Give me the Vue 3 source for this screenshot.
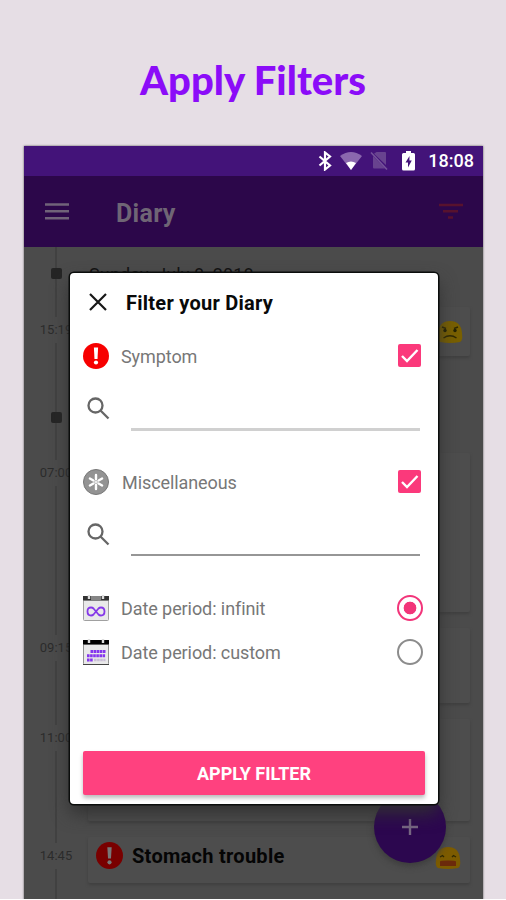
<template>
  <div class="page">
    <h1 class="headline">Apply Filters</h1>

    <div class="screen">
      <div class="status-bar">
        <svg class="bluetooth" viewBox="0 0 14 20">
          <path d="M1.5 5.5L12 14.5L7 18.5V1.5L12 5.5L1.5 14.5" />
        </svg>
        <svg class="wifi" viewBox="0 0 22 19">
          <path d="M0 4Q11-4 22 4L11 18Z" fill="#8b68ae" />
          <path d="M6 11Q11 8 16 11L11 18Z" fill="#fff" />
        </svg>
        <svg class="no-sim" viewBox="0 0 18 20">
          <path d="M6.5 1H15Q16 1 16 2V14L4 2.8ZM3 5L15 17.5H4Q3 17.5 3 16.5Z" fill="#68438f" />
          <path d="M1 1.5L17 18.5" stroke="#75539a" stroke-width="1.6" />
        </svg>
        <svg class="battery" viewBox="0 0 13 20">
          <path d="M4 0H9V2H11.5Q13 2 13 3.5V18Q13 19.5 11.5 19.5H1.5Q0 19.5 0 18V3.5Q0 2 1.5 2H4Z" fill="#fff" />
          <path d="M7.5 5L3.5 11.5H6V16.5L9.8 9.5H7.4Z" fill="#431379" />
        </svg>
        <span class="clock">18:08</span>
      </div>

      <div class="app-bar">
        <svg class="menu-icon" viewBox="0 0 24 17">
          <path d="M0 1.5H24M0 8.3H24M0 15.2H24" />
        </svg>
        <span class="app-title">Diary</span>
        <svg class="filter-icon" viewBox="0 0 24 17">
          <path d="M0 2H24M4 8.2H19M9 14.5H14" />
        </svg>
      </div>

      <div class="diary">
        <div class="timeline">
          <template v-for="(item, i) in timeline" :key="i">
            <span class="line" :style="{ height: item.line + 'px' }"></span>
            <span v-if="item.time" class="time">{{ item.time }}</span>
            <span v-else class="dot"></span>
          </template>
          <span class="line last"></span>
        </div>
        <div class="entries">
          <div class="date">Sunday, July 8, 2018</div>
          <div class="card first">
            <svg class="emoji" viewBox="0 0 26 24">
              <path d="M3 22Q0 21 1 13Q2 1 13 1Q24 1 25 13Q26 21 23 22Q13 24 3 22Z" fill="#796000" />
              <circle cx="8" cy="10.5" r="1.7" fill="#252300" />
              <circle cx="18" cy="10.5" r="1.7" fill="#252300" />
              <path d="M6.5 18Q13 13.5 19.5 18M5 7L9 8.5M17 8.5L21 7" stroke="#302900" fill="none" stroke-width="1.4" />
            </svg>
          </div>
          <div class="card second"></div>
          <div class="card third"></div>
          <div class="card fourth"></div>
          <div class="card trouble">
            <svg class="alert" viewBox="0 0 26 26">
              <circle cx="13" cy="13" r="13" fill="#790000" />
              <path d="M10.9 5H15.1L14.4 16H11.6Z" fill="#777" />
              <circle cx="13" cy="19.6" r="2" fill="#777" />
            </svg>
            <span class="entry-title">Stomach trouble</span>
            <svg class="emoji" viewBox="0 0 26 24">
              <path d="M3 22Q0 21 1 13Q2 1 13 1Q24 1 25 13Q26 21 23 22Q13 24 3 22Z" fill="#7c5b00" />
              <path d="M5 11L7.5 9.5L9 11M17 11L18.5 9.5L21 11" stroke="#302900" stroke-width="1.3" fill="none" />
              <path d="M5 20V15.5Q6 14.5 13 14.5Q20 14.5 21 15.5V20Z" fill="#6b2a0b" />
            </svg>
          </div>
        </div>
      </div>

      <button class="fab">
        <svg viewBox="0 0 18 18"><path d="M9 1V17M1 9H17" /></svg>
      </button>

      <div class="dialog">
        <div class="dialog-head">
          <svg class="close" viewBox="0 0 18 18"><path d="M1 1L17 17M17 1L1 17" /></svg>
          <h2>Filter your Diary</h2>
        </div>

        <div class="option">
          <svg class="option-icon" viewBox="0 0 26 26">
            <circle cx="13" cy="13" r="13" fill="#f70000" />
            <path d="M10.9 4.5H15.1L14.5 16H11.5Z" fill="#fff" />
            <circle cx="13" cy="19.5" r="2.1" fill="#fff" />
          </svg>
          <span class="label">Symptom</span>
          <span class="checkbox"><svg viewBox="0 0 23 23"><path d="M4 12L9 17L19.5 6" /></svg></span>
        </div>
        <div class="search">
          <svg viewBox="0 0 23 23"><circle cx="8.5" cy="8.5" r="7" /><path d="M13.5 13.5L21.5 21.5" /></svg>
          <span class="field soft"></span>
        </div>

        <div class="option">
          <svg class="option-icon" viewBox="0 0 26 26">
            <circle cx="13" cy="13" r="12.5" fill="#939393" stroke="#777" />
            <g stroke="#fff" stroke-width="2.4" stroke-linecap="round">
              <path d="M13 6V10M13 16V20M6.9 9.5L10.4 11.5M15.6 14.5L19.1 16.5M19.1 9.5L15.6 11.5M10.4 14.5L6.9 16.5" />
            </g>
            <path d="M13 9V17M9.5 11L16.5 15M16.5 11L9.5 15" stroke="#fff" stroke-width=".8" />
          </svg>
          <span class="label misc">Miscellaneous</span>
          <span class="checkbox"><svg viewBox="0 0 23 23"><path d="M4 12L9 17L19.5 6" /></svg></span>
        </div>
        <div class="search">
          <svg viewBox="0 0 23 23"><circle cx="8.5" cy="8.5" r="7" /><path d="M13.5 13.5L21.5 21.5" /></svg>
          <span class="field"></span>
        </div>

        <div class="option period">
          <svg class="option-icon" viewBox="0 0 26 26">
            <rect x=".5" y="5" width="25" height="20.5" rx="1" fill="#e9e9e9" stroke="#a0a0a0" />
            <path d="M0 1H26V5.5H0Z" fill="#333" />
            <path d="M8 1H18V5.5H8Z" fill="#858585" />
            <path d="M6 0V4M20 0V4" stroke="#ddd" stroke-width="2.4" />
            <path d="M13 16.5L10.5 13.5Q9.5 12.5 8 12.5Q4.5 12.5 4.5 16.5Q4.5 20.5 8 20.5Q9.5 20.5 10.5 19.5L15.5 13.5Q16.5 12.5 18 12.5Q21.5 12.5 21.5 16.5Q21.5 20.5 18 20.5Q16.5 20.5 15.5 19.5Z" fill="none" stroke="#8538e8" stroke-width="1.8" />
          </svg>
          <span class="label">Date period: infinit</span>
          <span class="radio on"></span>
        </div>
        <div class="option period">
          <svg class="option-icon" viewBox="0 0 26 26">
            <rect x=".5" y="5" width="25" height="20.5" rx="1" fill="#e9e9e9" stroke="#929292" />
            <path d="M0 1H26V5.5H0Z" fill="#000" />
            <path d="M6 0V4M20 0V4" stroke="#ddd" stroke-width="2.4" />
            <path d="M0 25.5H26" stroke="#444" />
            <g stroke="#8535ee" stroke-width="2.9" stroke-dasharray="2.6 .5">
              <path d="M7.5 12.5H22.5M4 16.7H22.5M4 21H10" />
            </g>
            <path d="M11 21H22.5" stroke="#c9bed7" stroke-width="2.5" stroke-dasharray="2.6 .5" />
          </svg>
          <span class="label">Date period: custom</span>
          <span class="radio"></span>
        </div>

        <button class="apply">APPLY FILTER</button>
      </div>
    </div>
  </div>
</template>

<script setup>
import { ref } from 'vue';

// line = length of the rule above each marker
const timeline = ref([
  { line: 21 },
  { line: 38, time: '15:19' },
  { line: 69 },
  { line: 37, time: '07:00' },
  { line: 149, time: '09:15' },
  { line: 64, time: '11:00' },
  { line: 92, time: '14:45' },
]);
</script>

<style>
body {
  background: #fff;
}
</style>

<style scoped>
.page {
  width: 506px;
  height: 899px;
  overflow: hidden;
  background: #e6dee5;
  font-family: Roboto, sans-serif;
}

.headline {
  height: 146px;
  margin: 0;
  padding-top: 55px;
  box-sizing: border-box;
  text-align: center;
  font: 900 40px/50px Lato, sans-serif;
  color: #8b0cf8;
}

.screen {
  position: relative;
  width: 459px;
  height: 754px;
  margin-left: 24px;
  background: #4b4b4b;
  box-shadow: 0 0 2px #555;
}

.status-bar {
  display: flex;
  align-items: center;
  justify-content: flex-end;
  height: 30px;
  padding-right: 9px;
  background: #431379;
}

.bluetooth {
  width: 14px;
  height: 20px;
  margin-right: 8px;
  fill: none;
  stroke: #fff;
  stroke-width: 2.2;
}

.wifi {
  width: 22px;
  height: 19px;
  margin-right: 8px;
}

.no-sim {
  width: 18px;
  height: 20px;
  margin-right: 14px;
}

.battery {
  width: 13px;
  height: 20px;
  margin-right: 13px;
}

.clock {
  color: #fff;
  font-size: 18px;
  font-weight: 500;
  line-height: 30px;
}

.app-bar {
  display: flex;
  align-items: center;
  height: 71px;
  padding: 0 20px 0 21px;
  background: #2c074a;
}

.menu-icon {
  width: 24px;
  height: 17px;
  stroke: #706379;
  stroke-width: 2.6;
}

.app-title {
  flex: 1;
  margin: 3px 0 0 47px;
  color: #6f6575;
  font-size: 25px;
  font-weight: 700;
  letter-spacing: 0.3px;
}

.filter-icon {
  width: 24px;
  height: 17px;
  stroke: #57122e;
  stroke-width: 2.4;
}

.diary {
  display: flex;
  height: 653px;
  overflow: hidden;
}

.timeline {
  display: flex;
  flex-direction: column;
  align-items: center;
  width: 64px;
}

.line {
  flex: none;
  width: 2px;
  background: #414141;
}

.last {
  height: 60px;
}

.dot {
  flex: none;
  width: 11px;
  height: 11px;
  border-radius: 2px;
  background: #252525;
}

.time {
  flex: none;
  height: 26px;
  color: #2b2b2b;
  font-size: 13px;
  line-height: 26px;
}

.entries {
  flex: 1;
  padding-right: 13px;
}

.date {
  height: 52px;
  margin-bottom: 8px;
  padding-left: 1px;
  color: #111;
  font-size: 18px;
  line-height: 55px;
  letter-spacing: 0.15px;
}

.card {
  display: flex;
  align-items: center;
  box-sizing: border-box;
  border-radius: 2px;
  background: #4d4d4d;
  box-shadow: 0 2px 3px #404040;
}

.first {
  justify-content: flex-end;
  height: 49px;
  padding-right: 7px;
  margin-bottom: 97px;
}

.second {
  height: 159px;
  margin-bottom: 16px;
}

.third {
  height: 75px;
  margin-bottom: 16px;
}

.fourth {
  height: 102px;
  margin-bottom: 16px;
}

.trouble {
  height: 46px;
  padding: 0 9px 0 8px;
}

.emoji {
  width: 26px;
  height: 24px;
}

.trouble .emoji {
  margin-top: -4px;
}

.alert {
  width: 27px;
  height: 27px;
  margin: -10px 9px 0 0;
}

.entry-title {
  flex: 1;
  margin-top: -8px;
  color: #050505;
  font-size: 20px;
  font-weight: 700;
  letter-spacing: 0.28px;
}

.fab {
  position: absolute;
  left: 350px;
  top: 645px;
  display: flex;
  align-items: center;
  justify-content: center;
  width: 72px;
  height: 72px;
  padding: 0;
  border: 0;
  border-radius: 50%;
  background: #2c074f;
  box-shadow: 0 3px 6px #3c3c3c;
}

.fab svg {
  width: 18px;
  height: 18px;
  stroke: #776783;
  stroke-width: 2.4;
}

.dialog {
  position: absolute;
  left: 46px;
  top: 127px;
  width: 368px;
  height: 531px;
  box-sizing: border-box;
  padding: 0 13px;
  border-radius: 4px;
  background: #fff;
  box-shadow: 0 0 0 1.5px #0b0d0c, 0 9px 18px #303030;
}

.dialog-head {
  display: flex;
  align-items: center;
  height: 58px;
  padding-left: 6px;
}

.close {
  width: 18px;
  height: 18px;
  margin-right: 19px;
  stroke: #171717;
  stroke-width: 2.2;
}

h2 {
  margin: 2px 0 0;
  color: #090909;
  font-size: 20px;
  font-weight: 700;
  letter-spacing: 0.26px;
}

.option {
  display: flex;
  align-items: center;
  height: 50px;
}

.option-icon {
  width: 26px;
  height: 26px;
  margin-right: 12px;
}

.label {
  flex: 1;
  color: #777;
  font-size: 18px;
  letter-spacing: -0.08px;
}

.misc {
  padding-left: 1px;
}

.checkbox {
  width: 23px;
  height: 23px;
  margin: -1px 4px 0 0;
  border-radius: 2px;
  background: #fb397b;
}

.checkbox svg {
  display: block;
  fill: none;
  stroke: #fff;
  stroke-width: 2.4;
}

.search {
  display: flex;
  height: 76px;
  padding: 16px 5px 0 4px;
  box-sizing: border-box;
}

.search svg {
  width: 23px;
  height: 23px;
  fill: none;
  stroke: #666;
  stroke-width: 2.3;
}

.field {
  width: 289px;
  height: 31px;
  margin-left: 21px;
  border-bottom: 2px solid #969696;
}

.soft {
  border-bottom: 3px solid #d0d0d0;
}

.period {
  height: 44px;
}

.search + .period {
  margin-top: 3px;
}

.radio {
  width: 26px;
  height: 26px;
  margin: -1px 2px 0 0;
  box-sizing: border-box;
  border: 2px solid #8c8c8c;
  border-radius: 50%;
}

.on {
  border-color: #f2357a;
  background: radial-gradient(circle, #f2357a 6px, #fff 6.7px);
}

.apply {
  display: block;
  width: 342px;
  height: 44px;
  margin-top: 77px;
  padding: 2px 0 0;
  border: 0;
  border-radius: 2px;
  background: #ff417f;
  box-shadow: 0 3px 4px #bbb;
  color: #fff;
  font: 700 18px/42px Roboto, sans-serif;
}
</style>
